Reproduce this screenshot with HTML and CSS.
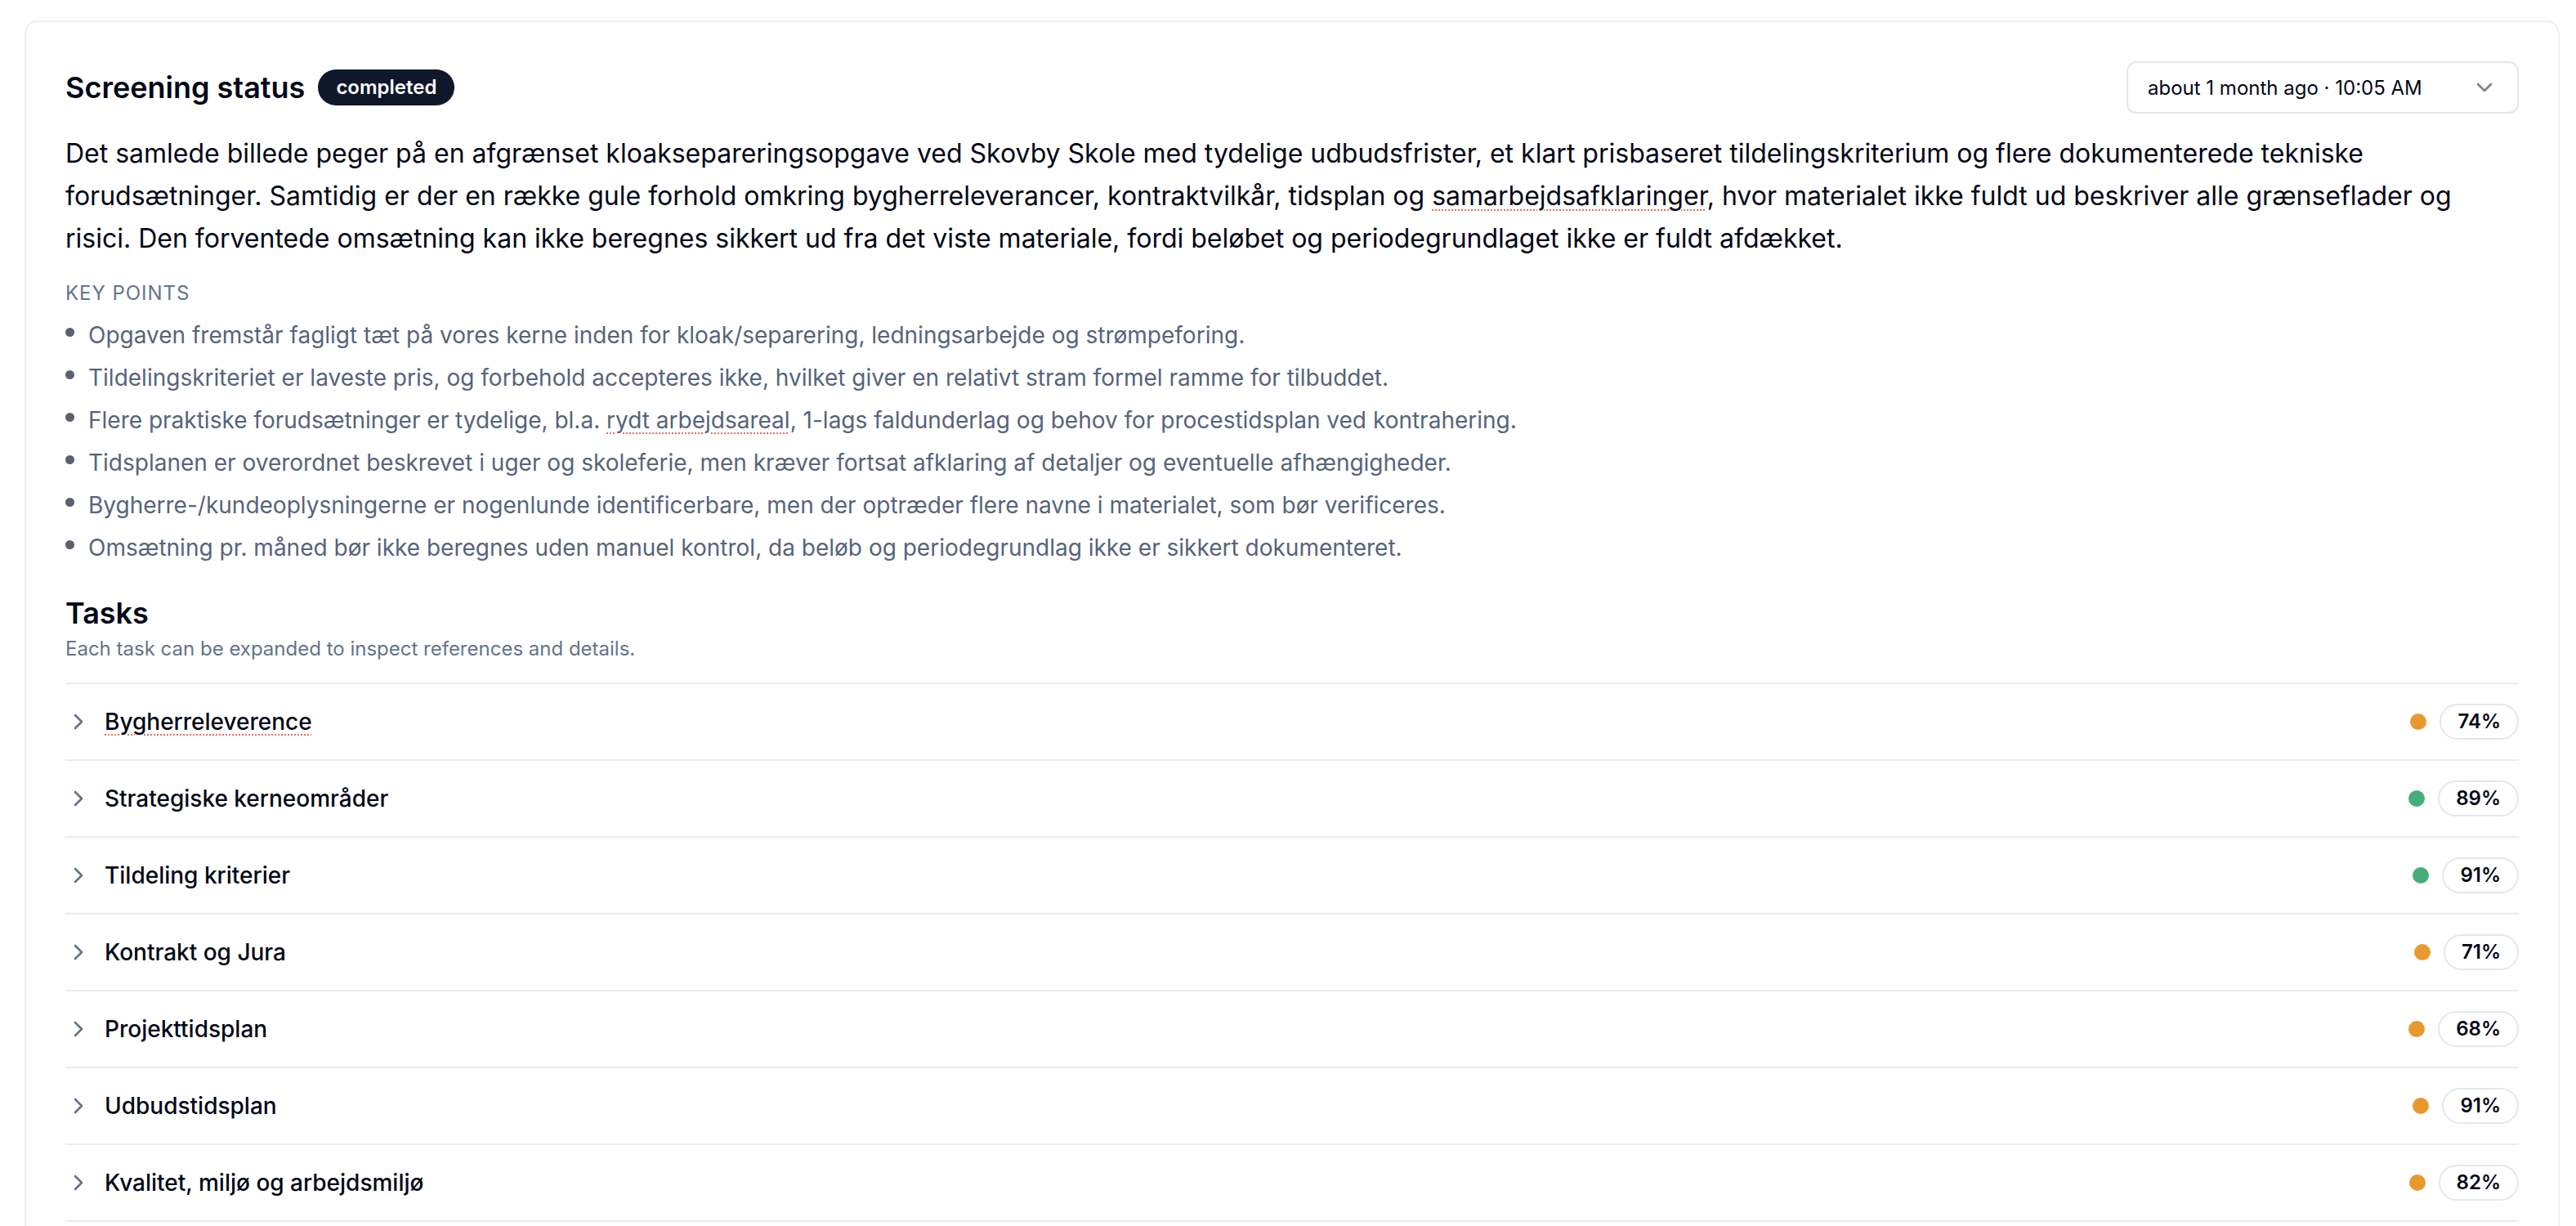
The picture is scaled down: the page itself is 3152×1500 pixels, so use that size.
FILE: index.html
```html
<!DOCTYPE html>
<html lang="da">
<head>
   <meta charset="UTF-8">
   <meta name="viewport" content="width=device-width, initial-scale=1.0">
   <title>Screening status</title>
   <link rel="stylesheet" href="styles.css">
</head>
<body>
   <section class="card">
      <header class="card-head">
         <div class="title-wrap">
            <h2>Screening status</h2>
            <span class="badge">completed</span>
         </div>
         <button class="select" type="button">
            <span>about 1 month ago · 10:05 AM</span>
            <svg viewBox="0 0 24 24" width="32" height="32" fill="none" stroke="currentColor" stroke-width="2" stroke-linecap="round" stroke-linejoin="round"><path d="m6 9 6 6 6-6"/></svg>
         </button>
      </header>

      <p class="summary">Det samlede billede peger på en afgrænset kloaksepareringsopgave ved Skovby Skole med tydelige udbudsfrister, et klart prisbaseret tildelingskriterium og flere dokumenterede tekniske forudsætninger. Samtidig er der en række gule forhold omkring bygherreleverancer, kontraktvilkår, tidsplan og <span class="spell">samarbejdsafklaringer</span>, hvor materialet ikke fuldt ud beskriver alle grænseflader og risici. Den forventede omsætning kan ikke beregnes sikkert ud fra det viste materiale, fordi beløbet og periodegrundlaget ikke er fuldt afdækket.</p>

      <div class="key-points">
         <h4>Key points</h4>
         <ul>
            <li><span>Opgaven fremstår fagligt tæt på vores kerne inden for kloak/separering, ledningsarbejde og strømpeforing.</span></li>
            <li><span>Tildelingskriteriet er laveste pris, og forbehold accepteres ikke, hvilket giver en relativt stram formel ramme for tilbuddet.</span></li>
            <li><span>Flere praktiske forudsætninger er tydelige, bl.a. <span class="spell">rydt arbejdsareal</span>, 1-lags faldunderlag og behov for procestidsplan ved kontrahering.</span></li>
            <li><span>Tidsplanen er overordnet beskrevet i uger og skoleferie, men kræver fortsat afklaring af detaljer og eventuelle afhængigheder.</span></li>
            <li><span>Bygherre-/kundeoplysningerne er nogenlunde identificerbare, men der optræder flere navne i materialet, som bør verificeres.</span></li>
            <li><span>Omsætning pr. måned bør ikke beregnes uden manuel kontrol, da beløb og periodegrundlag ikke er sikkert dokumenteret.</span></li>
         </ul>
      </div>

      <div class="tasks">
         <h3>Tasks</h3>
         <p class="hint">Each task can be expanded to inspect references and details.</p>
         <ul class="task-list">
            <li class="task">
               <svg class="chev" viewBox="0 0 24 24" width="32" height="32" fill="none" stroke="currentColor" stroke-width="2" stroke-linecap="round" stroke-linejoin="round"><path d="m9 18 6-6-6-6"/></svg>
               <span class="task-name"><span class="spell">Bygherreleverence</span></span>
               <span class="dot amber"></span>
               <span class="score">74%</span>
            </li>
            <li class="task">
               <svg class="chev" viewBox="0 0 24 24" width="32" height="32" fill="none" stroke="currentColor" stroke-width="2" stroke-linecap="round" stroke-linejoin="round"><path d="m9 18 6-6-6-6"/></svg>
               <span class="task-name">Strategiske kerneområder</span>
               <span class="dot green"></span>
               <span class="score">89%</span>
            </li>
            <li class="task">
               <svg class="chev" viewBox="0 0 24 24" width="32" height="32" fill="none" stroke="currentColor" stroke-width="2" stroke-linecap="round" stroke-linejoin="round"><path d="m9 18 6-6-6-6"/></svg>
               <span class="task-name">Tildeling kriterier</span>
               <span class="dot green"></span>
               <span class="score">91%</span>
            </li>
            <li class="task">
               <svg class="chev" viewBox="0 0 24 24" width="32" height="32" fill="none" stroke="currentColor" stroke-width="2" stroke-linecap="round" stroke-linejoin="round"><path d="m9 18 6-6-6-6"/></svg>
               <span class="task-name">Kontrakt og Jura</span>
               <span class="dot amber"></span>
               <span class="score">71%</span>
            </li>
            <li class="task">
               <svg class="chev" viewBox="0 0 24 24" width="32" height="32" fill="none" stroke="currentColor" stroke-width="2" stroke-linecap="round" stroke-linejoin="round"><path d="m9 18 6-6-6-6"/></svg>
               <span class="task-name">Projekttidsplan</span>
               <span class="dot amber"></span>
               <span class="score">68%</span>
            </li>
            <li class="task">
               <svg class="chev" viewBox="0 0 24 24" width="32" height="32" fill="none" stroke="currentColor" stroke-width="2" stroke-linecap="round" stroke-linejoin="round"><path d="m9 18 6-6-6-6"/></svg>
               <span class="task-name">Udbudstidsplan</span>
               <span class="dot amber"></span>
               <span class="score">91%</span>
            </li>
            <li class="task">
               <svg class="chev" viewBox="0 0 24 24" width="32" height="32" fill="none" stroke="currentColor" stroke-width="2" stroke-linecap="round" stroke-linejoin="round"><path d="m9 18 6-6-6-6"/></svg>
               <span class="task-name">Kvalitet, miljø og arbejdsmiljø</span>
               <span class="dot amber"></span>
               <span class="score">82%</span>
            </li>
         </ul>
      </div>
   </section>
</body>
</html>
```

FILE: styles.css
```css
* {
   margin: 0;
   padding: 0;
   box-sizing: border-box;
   font-family: Inter, "Noto Sans", sans-serif;
}
body {
   background-color: #fff;
   color: #020817;
   padding: 25px 20px 0 30px;
}
section.card {
   border: 2px solid #eceff3;
   border-radius: 16px;
   padding: 48px;
   min-height: 1600px;
}

/* header: title + badge on the left, version picker on the right */
.card-head {
   display: flex;
   align-items: center;
   justify-content: space-between;
   height: 64px;
}
.title-wrap {
   display: flex;
   align-items: center;
   gap: 16px;
}
.title-wrap h2 {
   font-size: 36px;
   line-height: 56px;
   font-weight: 600;
}
.badge {
   background-color: #0f172a;
   color: #fff;
   font-size: 24px;
   line-height: 32px;
   font-weight: 600;
   padding: 4px 20px;
   border: 2px solid transparent;
   border-radius: 999px;
}
button.select {
   display: flex;
   align-items: center;
   justify-content: space-between;
   width: 480px;
   height: 64px;
   padding: 0 24px;
   background-color: #fff;
   border: 2px solid #e2e8f0;
   border-radius: 12px;
   font-size: 24px;
   color: #020817;
   cursor: pointer;
}
button.select svg {
   opacity: 0.5;
}

p.summary {
   margin-top: 23px;
   font-size: 32px;
   line-height: 52px;
}
.spell {
   text-decoration: underline dotted #ee6b5e;
   text-decoration-thickness: 2px;
   text-underline-offset: 5px;
}

/* key points */
.key-points {
   margin-top: 25px;
}
.key-points h4 {
   font-size: 24px;
   line-height: 32px;
   font-weight: 400;
   letter-spacing: 0.04em;
   text-transform: uppercase;
   color: #64748b;
}
.key-points ul {
   list-style: none;
   margin-top: 15px;
   display: flex;
   flex-direction: column;
   gap: 12px;
}
.key-points li {
   display: flex;
   gap: 17px;
   font-size: 28px;
   line-height: 40px;
   color: #56647c;
}
.key-points li::before {
   content: "";
   flex: none;
   width: 11px;
   height: 11px;
   margin-top: 11px;
   border-radius: 50%;
   background-color: #5c6170;
}

/* tasks */
.tasks {
   margin-top: 32px;
}
.tasks h3 {
   font-size: 36px;
   line-height: 56px;
   font-weight: 600;
}
p.hint {
   font-size: 24px;
   line-height: 32px;
   color: #64748b;
}
ul.task-list {
   list-style: none;
   margin-top: 25px;
   border-top: 2px solid #e9edf2;
}
li.task {
   display: flex;
   align-items: center;
   gap: 16px;
   padding: 24px 0;
   border-bottom: 2px solid #e9edf2;
}
li.task .chev {
   flex: none;
   color: #64748b;
}
.task-name {
   flex: 1;
   font-size: 28px;
   line-height: 40px;
   font-weight: 500;
}
.dot {
   width: 20px;
   height: 20px;
   border-radius: 50%;
}
.dot.amber {
   background-color: #e8992e;
}
.dot.green {
   background-color: #47ad78;
}
.score {
   font-size: 24px;
   line-height: 32px;
   font-weight: 600;
   padding: 4px 20px;
   border: 2px solid #e2e8f0;
   border-radius: 999px;
}
```
